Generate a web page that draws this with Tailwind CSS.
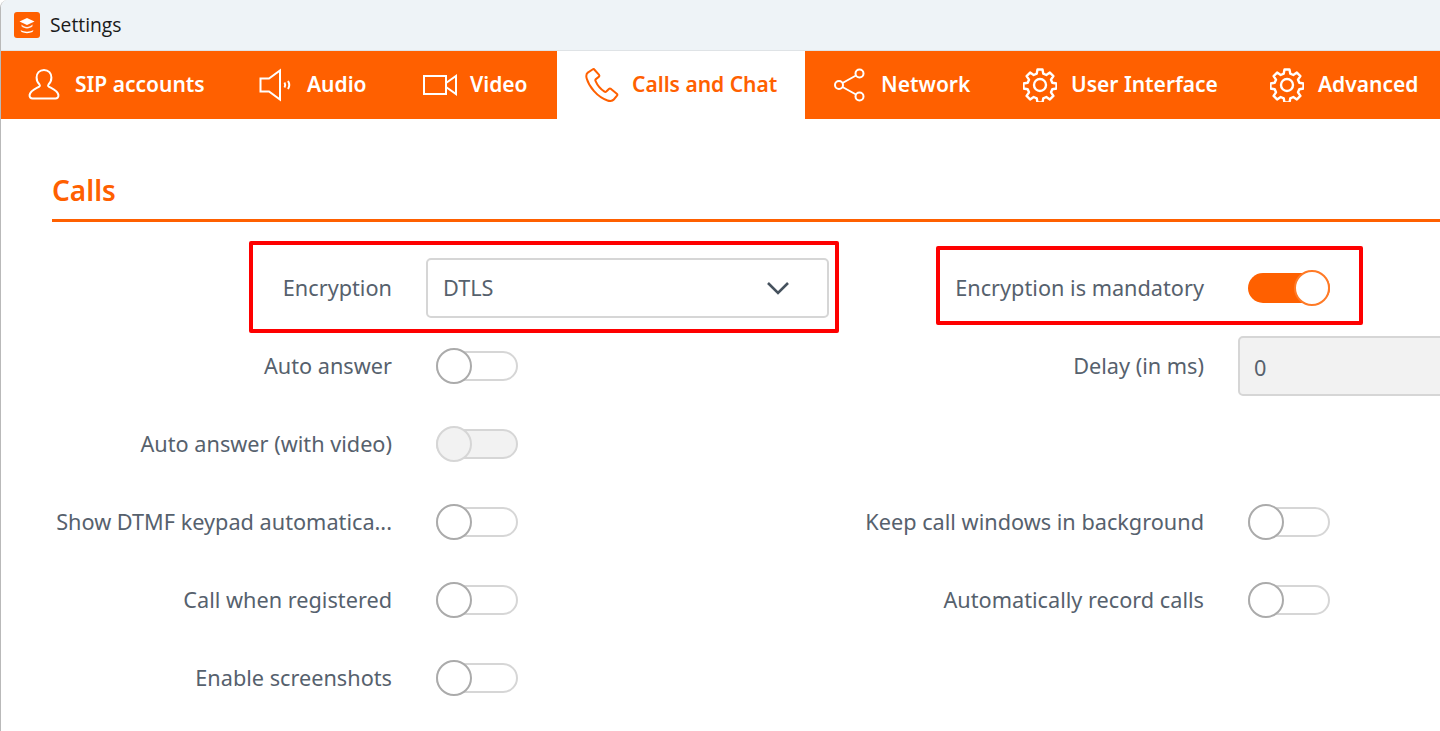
<!DOCTYPE html>
<html lang="en">
<head>
  <meta charset="UTF-8" />
  <title>Settings</title>
  <script src="https://cdn.jsdelivr.net/npm/@tailwindcss/browser@4"></script>
</head>
<body class="bg-white font-['Noto_Sans',sans-serif] overflow-hidden">
  <div class="relative w-[1440px] h-[731px] overflow-hidden bg-white border-l border-[#b9b9b9] rounded-tl-[8px]">

    <!-- title bar -->
    <div class="h-[51px] bg-[#eef3f7] flex items-center pl-[13px] gap-[10px] border-b border-[#dfe3e6]">
      <svg class="w-[26px] h-[26px]" viewBox="0 0 26 26">
        <rect width="26" height="26" rx="3" fill="#ff6000"/>
        <path d="M13 6l7.500 3.400-7.500 3.600-7.500-3.600z" fill="#fff"/>
        <path d="M7.500 12.500c1.500 1.600 3.400 2.400 5.500 2.400s4-.8 5.500-2.400v1.800c-1.500 1.400-3.400 2.100-5.500 2.100s-4-.7-5.500-2.100z" fill="#fff" opacity=".9"/>
        <path d="M6.500 18c3.800 2.200 9.200 2.200 13 0l-1 2c-3.300 1.500-7.700 1.500-11 0z" fill="#fff"/>
      </svg>
      <span class="font-['Open_Sans',sans-serif] text-[19.3px] text-[#1a1a1a] leading-none">Settings</span>
    </div>

    <!-- tabs -->
    <div class="h-[68px] bg-[#ff6000] flex text-[21px] font-semibold text-white whitespace-nowrap -ml-px">
      <div class="w-[232px] shrink-0 flex items-center pl-[27px]">
        <svg class="w-[34px] h-[34px] mr-[14px]" viewBox="0 0 34 34" fill="none" stroke="currentColor" stroke-width="2">
          <path d="M17 2c-4.600 0-7.400 3.300-7.400 7.600 0 3 1.200 5.400 2.900 7 .6.600.5 1.500-.3 2-3.400 1.900-8.900 3.800-9.600 8.400-.3 2 1 3.500 3 3.500h22.800c2 0 3.300-1.500 3-3.500-.7-4.600-6.200-6.500-9.600-8.400-.8-.5-.9-1.400-.3-2 1.700-1.600 2.900-4 2.900-7C24.400 5.300 21.600 2 17 2z"/>
        </svg>
        <span>SIP accounts</span>
      </div>
      <div class="w-[164px] shrink-0 flex items-center pl-[27px]">
        <svg class="w-[34px] h-[34px] mr-[14px]" viewBox="0 0 34 34" fill="none" stroke="currentColor" stroke-width="2">
          <path d="M1.500 10.500h8.500L21 2.500v29l-11-8H1.500z"/>
          <path d="M25.500 14.500c.9 1.500.9 3.500 0 5M29 13c1.600 2.500 1.600 5.500 0 8" stroke-width="2"/>
        </svg>
        <span>Audio</span>
      </div>
      <div class="w-[161px] shrink-0 flex items-center pl-[27px]">
        <svg class="w-[34px] h-[34px] mr-[13px]" viewBox="0 0 34 34" fill="none" stroke="currentColor" stroke-width="2">
          <path d="M1 8h22v18H1z"/>
          <path d="M23 15l10-7v18l-10-7"/>
        </svg>
        <span>Video</span>
      </div>
      <div class="w-[248px] shrink-0 flex items-center pl-[28px] bg-white text-[#ff6000]">
        <svg class="w-[34px] h-[34px] mr-[13px]" viewBox="0 0 34 34" fill="none" stroke="currentColor" stroke-width="2" stroke-linejoin="round">
          <path d="M7.500 1.500L2.800 4.600C1.200 5.800 1 8 1.700 10.500 4 18.500 12 29 22.500 32.500c2.800.9 5 .5 6.300-1l3.200-3.800c.5-.7.400-1.500-.2-2l-5.800-4.800c-.7-.5-1.500-.5-2.100.1l-2.600 2.500c-.5.500-1.200.6-1.800.2-3.500-2.300-7.200-6.500-9-10.800-.3-.7-.1-1.400.4-1.800l2.800-2.200c.6-.5.800-1.300.4-2L9.700 2c-.5-.8-1.400-1-2.200-.5z"/>
        </svg>
        <span>Calls and Chat</span>
      </div>
      <div class="w-[191px] shrink-0 flex items-center pl-[28px]">
        <svg class="w-[34px] h-[34px] mr-[14px]" viewBox="0 0 34 34" fill="none" stroke="currentColor" stroke-width="2">
          <circle cx="26.500" cy="5.500" r="4"/>
          <circle cx="6" cy="17" r="4"/>
          <circle cx="26.500" cy="28.500" r="4"/>
          <path d="M23 7.500L9.500 15M9.500 19l13.500 7.500"/>
        </svg>
        <span>Network</span>
      </div>
      <div class="w-[246px] shrink-0 flex items-center pl-[27px]">
        <svg class="w-[34px] h-[34px] mr-[14px]" viewBox="0 0 34 34" fill="none" stroke="currentColor" stroke-width="2.400">
          <circle cx="17" cy="17" r="6"/>
          <path d="M14.500 1.500h5l.8 4.200 3 1.300 3.600-2.400 3.500 3.500-2.400 3.600 1.300 3 4.200.8v5l-4.200.8-1.300 3 2.400 3.600-3.500 3.500-3.600-2.400-3 1.300-.8 4.200h-5l-.8-4.200-3-1.300-3.600 2.400-3.500-3.500 2.400-3.600-1.300-3-4.200-.8v-5l4.200-.8 1.300-3-2.400-3.600 3.500-3.500 3.600 2.400 3-1.300z" stroke-linejoin="round"/>
        </svg>
        <span>User Interface</span>
      </div>
      <div class="flex-1 flex items-center pl-[28px]">
        <svg class="w-[34px] h-[34px] mr-[14px]" viewBox="0 0 34 34" fill="none" stroke="currentColor" stroke-width="2.400">
          <circle cx="17" cy="17" r="6"/>
          <path d="M14.500 1.500h5l.8 4.200 3 1.300 3.600-2.400 3.500 3.500-2.400 3.600 1.300 3 4.200.8v5l-4.200.8-1.300 3 2.400 3.600-3.500 3.500-3.600-2.400-3 1.300-.8 4.200h-5l-.8-4.200-3-1.300-3.600 2.400-3.500-3.500 2.400-3.600-1.300-3-4.200-.8v-5l4.200-.8 1.300-3-2.400-3.600 3.500-3.500 3.600 2.400 3-1.300z" stroke-linejoin="round"/>
        </svg>
        <span>Advanced</span>
      </div>
    </div>

    <!-- calls section -->
    <div class="pl-[51px]">
      <div class="h-[103px] border-b-[3px] border-[#ff6000] flex items-end pb-[12px]">
        <h2 class="text-[28px] leading-[34px] font-semibold text-[#ff6000]">Calls</h2>
      </div>

      <div class="pt-[27px] text-[21.7px] text-[#56616d]">
        <div class="flex items-center h-[78px]">
          <div class="flex items-center w-[812px] shrink-0">
            <span class="w-[340px] shrink-0 text-right">Encryption</span>
            <div class="ml-[34px] w-[403px] h-[60px] rounded-[5px] border-2 border-[#d6d6d6] flex items-center justify-between pl-[15px] pr-[37px]">
              <span>DTLS</span>
              <svg class="w-[24px] h-[14px]" viewBox="0 0 24 14" fill="none" stroke="#46525e" stroke-width="2.600"><path d="M2 2l10 10L22 2"/></svg>
            </div>
          </div>
          <div class="flex items-center">
            <span class="w-[340px] shrink-0 text-right whitespace-nowrap">Encryption is mandatory</span>
            <div class="ml-[44px] relative w-[82px] h-[36px] flex items-center">
              <div class="w-full h-[30px] rounded-full bg-[#ff6000]"></div>
              <div class="absolute right-0 top-0 w-[36px] h-[36px] rounded-full bg-white border-2 border-[#ff7a26]"></div>
            </div>
          </div>
        </div>

        <div class="flex items-center h-[78px]">
          <div class="flex items-center w-[812px] shrink-0">
            <span class="w-[340px] shrink-0 text-right">Auto answer</span>
            <div class="ml-[44px] relative w-[82px] h-[36px] flex items-center">
              <div class="w-full h-[30px] rounded-full bg-white border-2 border-[#d6d6d6]"></div>
              <div class="absolute left-0 top-0 w-[36px] h-[36px] rounded-full bg-white border-2 border-[#ababab]"></div>
            </div>
          </div>
          <div class="flex items-center">
            <span class="w-[340px] shrink-0 text-right">Delay (in ms)</span>
            <div class="ml-[34px] w-[300px] shrink-0 h-[60px] rounded-[5px] border-2 border-[#d6d6d6] bg-[#f2f2f2] flex items-center pl-[14px] pt-[4px]">0</div>
          </div>
        </div>

        <div class="flex items-center h-[78px]">
          <div class="flex items-center w-[812px] shrink-0">
            <span class="w-[340px] shrink-0 text-right">Auto answer (with video)</span>
            <div class="ml-[44px] relative w-[82px] h-[36px] flex items-center">
              <div class="w-full h-[30px] rounded-full bg-[#f2f2f2] border-2 border-[#d6d6d6]"></div>
              <div class="absolute left-0 top-0 w-[36px] h-[36px] rounded-full bg-[#f2f2f2] border-2 border-[#d6d6d6]"></div>
            </div>
          </div>
        </div>

        <div class="flex items-center h-[78px]">
          <div class="flex items-center w-[812px] shrink-0">
            <span class="w-[340px] shrink-0 text-right whitespace-nowrap">Show DTMF keypad automatica...</span>
            <div class="ml-[44px] relative w-[82px] h-[36px] flex items-center">
              <div class="w-full h-[30px] rounded-full bg-white border-2 border-[#d6d6d6]"></div>
              <div class="absolute left-0 top-0 w-[36px] h-[36px] rounded-full bg-white border-2 border-[#ababab]"></div>
            </div>
          </div>
          <div class="flex items-center">
            <span class="w-[340px] shrink-0 text-right whitespace-nowrap">Keep call windows in background</span>
            <div class="ml-[44px] relative w-[82px] h-[36px] flex items-center">
              <div class="w-full h-[30px] rounded-full bg-white border-2 border-[#d6d6d6]"></div>
              <div class="absolute left-0 top-0 w-[36px] h-[36px] rounded-full bg-white border-2 border-[#ababab]"></div>
            </div>
          </div>
        </div>

        <div class="flex items-center h-[78px]">
          <div class="flex items-center w-[812px] shrink-0">
            <span class="w-[340px] shrink-0 text-right">Call when registered</span>
            <div class="ml-[44px] relative w-[82px] h-[36px] flex items-center">
              <div class="w-full h-[30px] rounded-full bg-white border-2 border-[#d6d6d6]"></div>
              <div class="absolute left-0 top-0 w-[36px] h-[36px] rounded-full bg-white border-2 border-[#ababab]"></div>
            </div>
          </div>
          <div class="flex items-center">
            <span class="w-[340px] shrink-0 text-right">Automatically record calls</span>
            <div class="ml-[44px] relative w-[82px] h-[36px] flex items-center">
              <div class="w-full h-[30px] rounded-full bg-white border-2 border-[#d6d6d6]"></div>
              <div class="absolute left-0 top-0 w-[36px] h-[36px] rounded-full bg-white border-2 border-[#ababab]"></div>
            </div>
          </div>
        </div>

        <div class="flex items-center h-[78px]">
          <div class="flex items-center w-[812px] shrink-0">
            <span class="w-[340px] shrink-0 text-right">Enable screenshots</span>
            <div class="ml-[44px] relative w-[82px] h-[36px] flex items-center">
              <div class="w-full h-[30px] rounded-full bg-white border-2 border-[#d6d6d6]"></div>
              <div class="absolute left-0 top-0 w-[36px] h-[36px] rounded-full bg-white border-2 border-[#ababab]"></div>
            </div>
          </div>
        </div>
      </div>
    </div>

    <!-- red annotation boxes -->
    <div class="absolute left-[248px] top-[241px] w-[590px] h-[92px] border-[4px] border-[#fe0000] rounded-[2px]"></div>
    <div class="absolute left-[935px] top-[246px] w-[427px] h-[79px] border-[4px] border-[#fe0000] rounded-[2px]"></div>
  </div>
</body>
</html>
